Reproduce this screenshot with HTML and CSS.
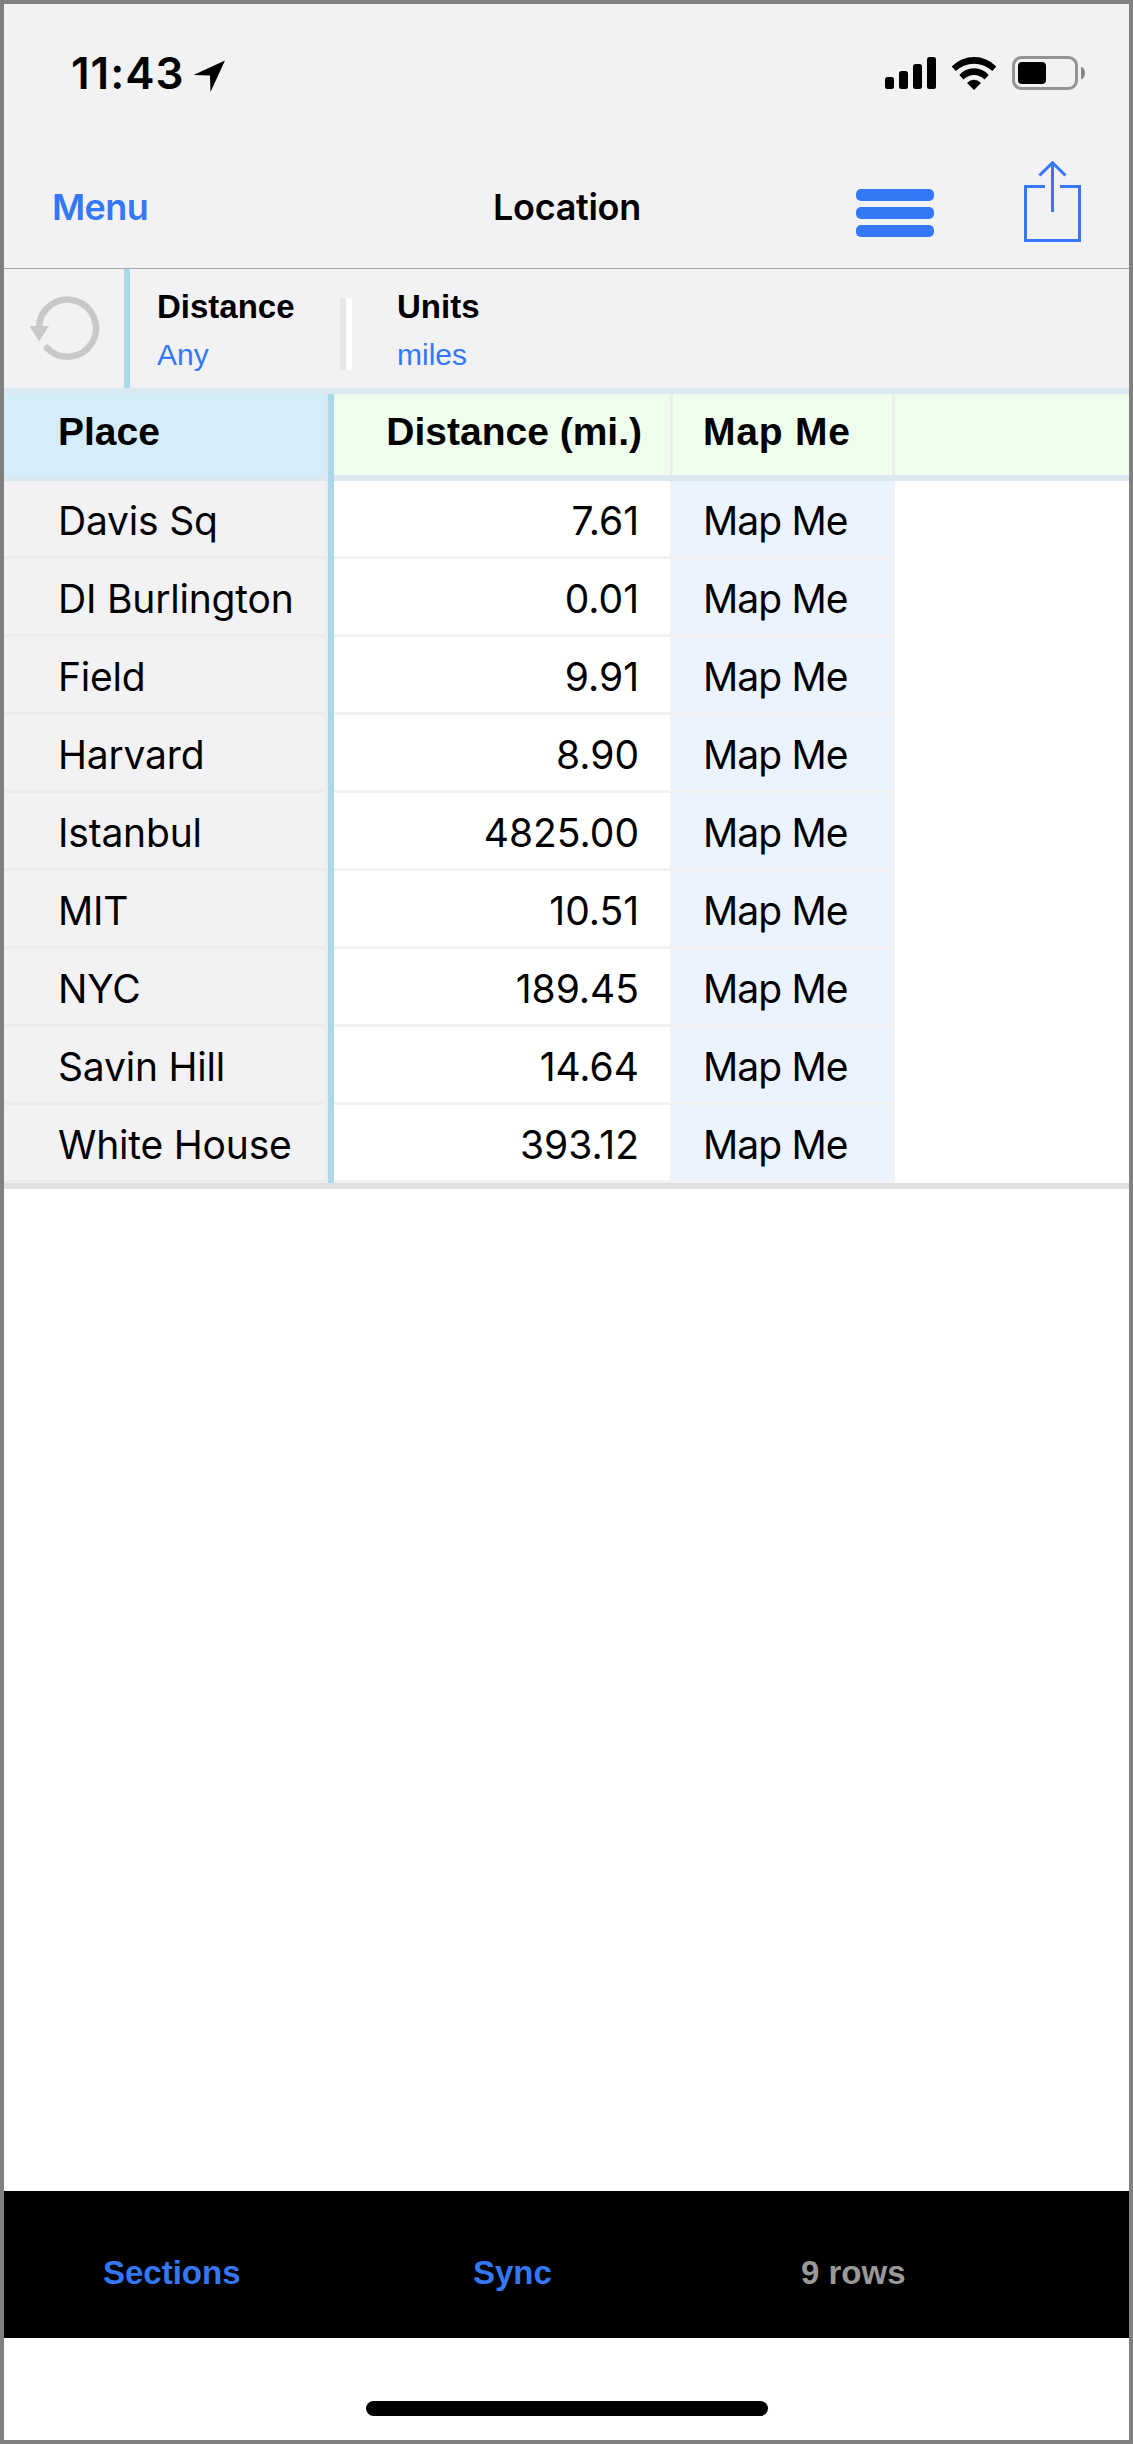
FILE: index.html
```
<!DOCTYPE html>
<html lang="en">
<head>
    <meta charset="UTF-8">
    <meta name="viewport" content="width=device-width, initial-scale=1.0">
    <title>Location</title>
    <link rel="stylesheet" href="styles.css">
</head>
<body>
<div class="screen">
    <div class="status-bar">
        <span class="time">11:43</span>
        <svg class="location-arrow" width="33" height="33" viewBox="0 0 33 33"><path d="M32 0.500L0.500 15L17 15.500L17.500 32Z"/></svg>
        <svg class="signal" width="51" height="32" viewBox="0 0 51 32">
            <rect x="0" y="20" width="9" height="12" rx="2.500"/>
            <rect x="14" y="14" width="9" height="18" rx="2.500"/>
            <rect x="28" y="7" width="9" height="25" rx="2.500"/>
            <rect x="42" y="0" width="9" height="32" rx="2.500"/>
        </svg>
        <svg class="wifi" width="46" height="33" viewBox="0 0 46 33">
            <path d="M0.700 9.500Q10 0 23 0T45.300 9.500L41.300 14Q33 6.700 23 6.700T4.700 14Z"/>
            <path d="M8.300 18Q14 11.300 23 11.300T37.700 18L33.500 22.500Q29 18 23 18T12.500 22.500Z"/>
            <path d="M16 26Q23 19.500 30 26L23 33Z"/>
        </svg>
        <svg class="battery" width="73" height="34" viewBox="0 0 73 34">
            <rect x="1.500" y="1.500" width="63" height="31" rx="8" fill="none" stroke="#949496" stroke-width="3"/>
            <rect x="6" y="6" width="28" height="22" rx="4"/>
            <path d="M69 10.700Q73 12 73 17T69 23.300Z" fill="#858587"/>
        </svg>
    </div>

    <div class="nav-bar">
        <a class="menu">Menu</a>
        <h1>Location</h1>
        <div class="bars"><i></i><i></i><i></i></div>
        <svg class="share" width="57" height="81" viewBox="0 0 57 81" fill="none" stroke="#3478f7" stroke-width="3">
            <path d="M21 25.500H1.500V79.500H55.500V25.500H36"/>
            <path d="M28.500 51V2M15.500 14.500L28.500 1.700L41.500 14.500"/>
        </svg>
    </div>

    <div class="filters">
        <div class="refresh">
            <svg width="72" height="68" viewBox="0 0 72 68">
                <path d="M10 33A28.500 28.500 0 1 1 18 54" fill="none" stroke="#c8c8ca" stroke-width="6.500" stroke-linecap="round"/>
                <path d="M0.500 32H20L10 47.500Z" fill="#c8c8ca"/>
            </svg>
        </div>
        <div class="filter">
            <b>Distance</b>
            <span>Any</span>
        </div>
        <div class="divider"></div>
        <div class="filter">
            <b>Units</b>
            <span>miles</span>
        </div>
    </div>

    <table>
        <thead>
            <tr><th class="place">Place</th><th class="dist">Distance (mi.)</th><th class="map">Map Me</th><th></th></tr>
        </thead>
        <tbody>
            <tr><td class="place">Davis Sq</td><td class="dist">7.61</td><td class="map">Map Me</td><td></td></tr>
            <tr><td class="place">DI Burlington</td><td class="dist">0.01</td><td class="map">Map Me</td><td></td></tr>
            <tr><td class="place">Field</td><td class="dist">9.91</td><td class="map">Map Me</td><td></td></tr>
            <tr><td class="place">Harvard</td><td class="dist">8.90</td><td class="map">Map Me</td><td></td></tr>
            <tr><td class="place">Istanbul</td><td class="dist">4825.00</td><td class="map">Map Me</td><td></td></tr>
            <tr><td class="place">MIT</td><td class="dist">10.51</td><td class="map">Map Me</td><td></td></tr>
            <tr><td class="place">NYC</td><td class="dist">189.45</td><td class="map">Map Me</td><td></td></tr>
            <tr><td class="place">Savin Hill</td><td class="dist">14.64</td><td class="map">Map Me</td><td></td></tr>
            <tr><td class="place">White House</td><td class="dist">393.12</td><td class="map">Map Me</td><td></td></tr>
        </tbody>
    </table>

    <div class="toolbar">
        <a>Sections</a>
        <a>Sync</a>
        <span>9 rows</span>
    </div>
    <div class="home"><i></i></div>
</div>
</body>
</html>
```
FILE: styles.css
```
* {
    box-sizing: border-box;
}

body {
    margin: 0;
    background: #fff;
    color: #000;
    font-family: Inter, sans-serif;
}

.screen {
    display: flex;
    flex-direction: column;
    width: 1133px;
    height: 2444px;
    border: 4px solid #808080;
}

svg {
    display: block;
}

/* status bar */
.status-bar {
    display: flex;
    align-items: center;
    height: 138px;
    padding: 0 44px 0 67px;
    background: #f2f2f5;
}

.time {
    width: 122px;
    font-size: 44px;
    font-weight: 600;
    letter-spacing: 1px;
    white-space: nowrap;
}

.location-arrow {
    margin: 6px auto 0 0;
}

.wifi {
    margin: 0 15px;
}

/* navigation */
.nav-bar {
    display: grid;
    grid-template-columns: 489px 363px 168px 57px;
    height: 127px;
    border-bottom: 1px solid #a9a9ab;
    background: #f2f2f5;
    color: #3478f7;
    font-size: 36px;
    line-height: 130px;
}

.menu {
    padding-left: 48px;
    font-weight: 600;
    letter-spacing: -0.6px;
}

.nav-bar h1 {
    margin: 0;
    color: #000;
    font-size: 36px;
    font-weight: 600;
    letter-spacing: -0.3px;
}

.bars {
    width: 78px;
    padding-top: 47px;
}

.bars i {
    display: block;
    height: 12px;
    margin-bottom: 6px;
    border-radius: 5px;
    background: #3478f7;
}

.share {
    margin-top: 19px;
}

/* filters */
.filters {
    display: flex;
    height: 119px;
    background: #f2f2f5;
    font-family: "Liberation Sans", sans-serif;
}

.refresh {
    width: 126px;
    padding: 25px 0 0 25px;
    border-right: 6px solid #acd8ea;
}

.filter {
    display: flex;
    flex-direction: column;
    width: 210px;
    padding: 14px 0 0 27px;
}

.filter b {
    font-size: 33px;
    line-height: 48px;
}

.filter span {
    color: #3478f7;
    font-size: 30px;
    line-height: 48px;
}

.divider {
    width: 12px;
    height: 72px;
    margin: 29px 18px 0 0;
    border-left: 6px solid #e6e6e6;
    background: #fff;
}

/* table, the cell lines are inset shadows so the corners stay square */
table {
    width: 1125px;
    border-top: 6px solid #dae8f1;
    border-bottom: 6px solid #e0e0e0;
    border-collapse: separate;
    border-spacing: 0;
    table-layout: fixed;
    font-size: 39px;
}

th {
    height: 87px;
    padding: 0 0 12px;
    background: #effeec;
    box-shadow: inset 0 -6px #dae8f1;
    font-family: "Liberation Sans", sans-serif;
    text-align: left;
}

td {
    height: 78px;
    padding: 4px 0 3px;
    line-height: 71px;
}

.place {
    width: 330px;
    padding-left: 54px;
}

th.place {
    background: #d5edf9;
    box-shadow: inset -6px 0 #acd8ea, inset 0 -6px #dae8f1, inset -9px 0 #d8e8f1;
}

td.place {
    background: #f2f2f5;
    box-shadow: inset -6px 0 #acd8ea, inset -9px 0 #ececee, inset 0 -3px #ececee;
    letter-spacing: -0.2px;
}

.dist {
    width: 339px;
    padding-right: 31px;
    text-align: right;
}

td.dist {
    padding-right: 34px;
    box-shadow: inset -3px -3px #f2f2f2;
}

.map {
    width: 222px;
    padding-left: 30px;
}

th.dist,
th.map {
    box-shadow: inset 0 -6px #dae8f1, inset -3px 0 #ebeeea;
}

th.map {
    letter-spacing: 0.8px;
}

td.map {
    background: #ebf3fe;
    box-shadow: inset -3px -3px #f2f2f2;
    letter-spacing: -0.9px;
}

/* bottom */
.toolbar {
    display: grid;
    grid-template-columns: 370px 328px 1fr;
    height: 147px;
    margin-top: auto;
    padding-left: 99px;
    background: #000;
    color: #3478f7;
    font: bold 33px/163px "Liberation Sans", sans-serif;
}

.toolbar span {
    color: #999;
}

.home {
    height: 102px;
    padding-top: 63px;
}

.home i {
    display: block;
    width: 402px;
    height: 15px;
    margin: 0 auto;
    border-radius: 8px;
    background: #000;
}
```
